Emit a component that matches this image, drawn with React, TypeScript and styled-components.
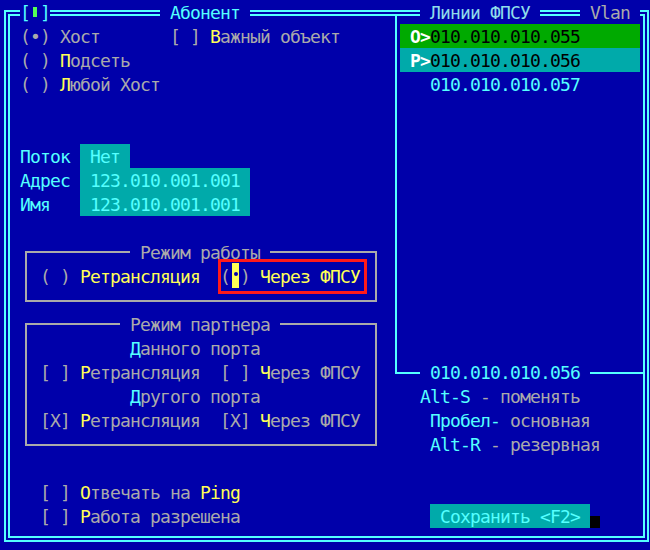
import styled, { createGlobalStyle } from "styled-components";

const GlobalStyle = createGlobalStyle`
  html, body {
    margin: 0;
    padding: 0;
    background: #0000aa;
  }
`;

const GRAY = "#aaaaaa";
const LCYAN = "#55ffff";
const YELLOW = "#ffff55";

const Screen = styled.div`
  width: 650px;
  height: 550px;
  box-sizing: border-box;
  padding: 10px 0 0 4px;
  background: #0000aa;
  overflow: hidden;
  font-family: "DejaVu Sans Mono", "Liberation Mono", monospace;
  font-size: 18px;
  letter-spacing: calc(10px - 1ch);
  line-height: 25px;
  color: ${GRAY};
`;

const Window = styled.div`
  position: relative;
  width: 645px;
  height: 532px;
  box-sizing: border-box;
  border: 6px double ${LCYAN};
  display: flex;
  align-items: flex-start;
`;

const TitleBar = styled.div`
  position: absolute;
  top: -16px;
  left: -10px;
  width: 650px;
  height: 24px;
  white-space: pre;
`;

const Tag = styled.span<{ $c: string }>`
  background: #0000aa;
  color: ${p => p.$c};
`;

const Led = styled.span`
  display: inline-block;
  vertical-align: top;
  width: 4px;
  height: 10px;
  margin: 7px 3px 0;
  background: #55ff55;
`;

const LeftPane = styled.div`
  width: 380px;
  padding-top: 8px;
`;

const RightPane = styled.div`
  flex: 1;
`;

const Line = styled.div`
  height: 24px;
  white-space: pre;
`;

const C = styled.span<{ $c: string }>`
  color: ${p => p.$c};
`;

const Field = styled.span`
  background: #00aaaa;
  color: ${LCYAN};
  display: inline-block;
  vertical-align: top;
  height: 24px;
`;

const Group = styled.fieldset<{ $gap?: number }>`
  margin: ${p => p.$gap ?? 0}px 0 0 15px;
  padding: 0 0 12px 13px;
  width: 352px;
  min-inline-size: 0;
  box-sizing: border-box;
  border: 2px solid ${GRAY};
`;

const GroupTitle = styled.legend<{ $offset: number }>`
  padding: 0;
  margin-left: ${p => p.$offset}px;
  height: 24px;
  white-space: pre;
  color: ${GRAY};
`;

const Focus = styled.span`
  position: relative;
  display: inline-block;
  vertical-align: top;
  height: 24px;
  &::after {
    content: "";
    position: absolute;
    left: -2px;
    right: -7px;
    top: -5px;
    bottom: -6px;
    border: 3px solid #ff1a1a;
  }
`;

const Cursor = styled.span`
  display: inline-block;
  vertical-align: top;
  width: 7px;
  height: 25px;
  margin: -1px 1.5px 0 1.5px;
  background: ${YELLOW};
  position: relative;
  &::after {
    content: "";
    position: absolute;
    left: 2px;
    top: 9px;
    width: 4px;
    height: 4px;
    border-radius: 50%;
    background: #0000aa;
  }
`;

const Checks = styled.div`
  margin-top: 34px;
`;

const Panel = styled.div`
  position: relative;
  margin-left: 5px;
  height: 358px;
  box-sizing: border-box;
  padding-top: 8px;
  border-left: 2px solid ${LCYAN};
  border-bottom: 2px solid ${LCYAN};
`;

const Bar = styled.div<{ $bg?: string }>`
  margin-left: 3px;
  width: 240px;
  height: 24px;
  white-space: pre;
  background: ${p => p.$bg ?? "transparent"};
  color: #000;
`;

const Mark = styled.span`
  color: #fff;
  font-weight: bold;
`;

const PanelLabel = styled.div`
  position: absolute;
  left: 23px;
  bottom: -12px;
  height: 24px;
  white-space: pre;
  background: #0000aa;
  color: ${LCYAN};
`;

const Help = styled.div`
  margin-top: 10px;
`;

const ButtonRow = styled(Line)`
  margin-top: 48px;
`;

const Button = styled.span`
  display: inline-block;
  vertical-align: top;
  height: 24px;
  background: #00aaaa;
  color: ${LCYAN};
`;

const Shadow = styled.span`
  display: inline-block;
  vertical-align: top;
  width: 10px;
  height: 12px;
  margin-top: 12px;
  background: #000;
`;

const Hot = ({ k, rest }: { k: string; rest: string }) => (
  <>
    <C $c={YELLOW}>{k}</C>
    {rest}
  </>
);

export default function App() {
  return (
    <>
      <GlobalStyle />
      <Screen>
        <Window>
          <TitleBar>
            {"  "}
            <Tag $c={LCYAN}>[<Led />]</Tag>
            {"           "}
            <Tag $c={LCYAN}> Абонент </Tag>
            {"                 "}
            <Tag $c="#8fdcea"> Линии ФПСУ </Tag>
            {"    "}
            <Tag $c={GRAY}> Vlan </Tag>
          </TitleBar>

          <LeftPane>
            <Line>
              {" (•) Хост       [ ] "}
              <Hot k="В" rest="ажный объект" />
            </Line>
            <Line>
              {" ( ) "}
              <Hot k="П" rest="одсеть" />
            </Line>
            <Line>
              {" ( ) "}
              <Hot k="Л" rest="юбой Хост" />
            </Line>
            <Line />
            <Line />
            <Line>
              <C $c={LCYAN}>{" Поток "}</C>
              <Field> Нет </Field>
            </Line>
            <Line>
              <C $c={LCYAN}>{" Адрес "}</C>
              <Field> 123.010.001.001 </Field>
            </Line>
            <Line>
              <C $c={LCYAN}>{" Имя   "}</C>
              <Field> 123.010.001.001 </Field>
            </Line>
            <Line />

            <Group>
              <GroupTitle $offset={90}> Режим работы </GroupTitle>
              <Line>
                {"( ) "}
                <C $c={YELLOW}>Ретрансляция</C>
                {"  "}
                <Focus>
                  (<Cursor />){" "}
                  <C $c={YELLOW}>Через ФПСУ</C>
                </Focus>
              </Line>
            </Group>

            <Group $gap={10}>
              <GroupTitle $offset={80}> Режим партнера </GroupTitle>
              <Line>
                {"         "}
                <C $c={LCYAN}>Д</C>
                {"анного порта"}
              </Line>
              <Line>
                {"[ ] "}
                <Hot k="Р" rest="етрансляция" />
                {"  [ ] "}
                <Hot k="Ч" rest="ерез ФПСУ" />
              </Line>
              <Line>
                {"         "}
                <C $c={LCYAN}>Д</C>
                {"ругого порта"}
              </Line>
              <Line>
                {"[X] "}
                <Hot k="Р" rest="етрансляция" />
                {"  [X] "}
                <Hot k="Ч" rest="ерез ФПСУ" />
              </Line>
            </Group>

            <Checks>
              <Line>
                {"   [ ] "}
                <Hot k="О" rest="твечать на " />
                <C $c={YELLOW}>Ping</C>
              </Line>
              <Line>
                {"   [ ] "}
                <Hot k="Р" rest="абота разрешена" />
              </Line>
            </Checks>
          </LeftPane>

          <RightPane>
            <Panel>
              <Bar $bg="#00aa00">
                <Mark> O&gt;</Mark>010.010.010.055
              </Bar>
              <Bar $bg="#00aaaa">
                <Mark> P&gt;</Mark>010.010.010.056
              </Bar>
              <Bar>
                <C $c={LCYAN}>{"   010.010.010.057"}</C>
              </Bar>
              <PanelLabel> 010.010.010.056 </PanelLabel>
            </Panel>

            <Help>
              <Line>
                {"   "}
                <C $c={LCYAN}>Alt-S</C>
                {" - поменять"}
              </Line>
              <Line>
                {"    "}
                <C $c={LCYAN}>Пробел-</C>
                {" основная"}
              </Line>
              <Line>
                {"    "}
                <C $c={LCYAN}>Alt-R</C>
                {" - резервная"}
              </Line>
            </Help>

            <ButtonRow>
              {"    "}
              <Button> Сохранить &lt;F2&gt; </Button>
              <Shadow />
            </ButtonRow>
          </RightPane>
        </Window>
      </Screen>
    </>
  );
}
